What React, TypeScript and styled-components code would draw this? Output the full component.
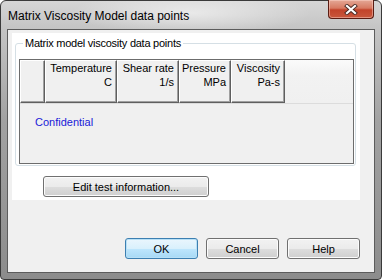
import { ReactElement } from 'react';
import styled, { createGlobalStyle } from 'styled-components';

const Global = createGlobalStyle`
  html, body {
    margin: 0;
    padding: 0;
    background: #ffffff;
  }
  body {
    font-family: "Liberation Sans", Arial, sans-serif;
    font-size: 11px;
    color: #000;
  }
`;

const Window = styled.div`
  box-sizing: border-box;
  width: 382px;
  height: 280px;
  border: 1px solid #3a3a3a;
  border-radius: 6px 6px 4px 4px;
  background: linear-gradient(to bottom, #d6d6d6 0px, #c4c4c4 28px, #a2a2a2 120px, #8c8c8c 100%);
  padding: 0 6px 6px 6px;
  display: flex;
  flex-direction: column;
`;

const TitleBar = styled.div`
  height: 28px;
  display: flex;
  justify-content: space-between;
  align-items: flex-start;
  background: radial-gradient(ellipse 120px 22px at 190px 12px, rgba(255, 255, 255, 0.55), rgba(255, 255, 255, 0));
  margin: 0 -6px;
  padding: 0 7px 0 7px;
`;

const Title = styled.div`
  font-size: 12px;
  line-height: 14px;
  margin-top: 8px;
  color: #000;
`;

const CloseButton = styled.div`
  width: 46px;
  height: 19px;
  margin-top: -1px;
  box-sizing: border-box;
  border: 1px solid #5a1c12;
  border-top: none;
  border-radius: 0 0 4px 4px;
  background: linear-gradient(to bottom, #e4a896 0%, #d77a62 45%, #c2432a 55%, #c8573c 100%);
  box-shadow: inset 0 0 0 1px rgba(255, 220, 210, 0.45);
  display: flex;
  align-items: center;
  justify-content: center;
`;

const Client = styled.div`
  flex: 1;
  border: 1px solid #5c5c5c;
  background: #f0f0f0;
  display: flex;
  flex-direction: column;
`;

const Panel = styled.div`
  margin: 3px 14px 0 4px;
  height: 167px;
  box-sizing: border-box;
  background: #ffffff;
  padding: 4px 0 0 3px;
  display: flex;
  flex-direction: column;
`;

const Group = styled.fieldset`
  margin: 0;
  width: 341px;
  box-sizing: border-box;
  border: 1px solid #d5dfe5;
  border-radius: 3px;
  padding: 0 1px 1px 3px;
  box-shadow: inset 1px 1px 0 #ffffff;
`;

const Legend = styled.legend`
  padding: 0 2px;
  margin-left: 4px;
  font-size: 11px;
  line-height: 13px;
  letter-spacing: -0.25px;
`;

const Grid = styled.div`
  margin-top: 9px;
  height: 105px;
  box-sizing: border-box;
  border: 1px solid #6c6c6c;
  background: #f0f0f0;
  display: flex;
  flex-direction: column;
`;

const HeaderRow = styled.div`
  display: flex;
  height: 43px;
  background: linear-gradient(to bottom, #fbfbfb 0%, #f2f2f2 35%, #f0f0f0 100%);
  border-bottom: 1px solid #dcdcdc;
`;

const HeaderCell = styled.div<{ $w: number }>`
  width: ${(p) => p.$w}px;
  flex: none;
  box-sizing: border-box;
  background: #f0f0f0;
  border-top: 1px solid #ffffff;
  border-left: 1px solid #ffffff;
  border-right: 1px solid #5f5f5f;
  border-bottom: 1px solid #5f5f5f;
  box-shadow: inset -1px -1px 0 #a0a0a0;
  padding: 0 4px 0 0;
  text-align: right;
  line-height: 14px;
  white-space: nowrap;
  color: #000;
`;

const Body = styled.div`
  flex: 1;
  padding: 11px 0 0 15px;
`;

const Note = styled.div`
  color: #1a1ad8;
  font-size: 11px;
  line-height: 14px;
`;

const EditButtonRow = styled.div`
  margin-top: 10px;
  padding-left: 28px;
`;

const Button = styled.button<{ $w: number; $default?: boolean }>`
  width: ${(p) => p.$w}px;
  height: 21px;
  box-sizing: border-box;
  font-family: "Liberation Sans", Arial, sans-serif;
  font-size: 11px;
  color: #000;
  padding: 0;
  border-radius: 3px;
  border: 1px solid ${(p) => (p.$default ? '#3c7fb1' : '#707070')};
  background: ${(p) =>
    p.$default
      ? 'linear-gradient(to bottom, #eaf6fd 0%, #d9f0fc 50%, #bee6fd 51%, #a7d9f5 100%)'
      : 'linear-gradient(to bottom, #f2f2f2 0%, #ebebeb 50%, #dddddd 51%, #cfcfcf 100%)'};
  box-shadow: inset 0 0 0 1px ${(p) => (p.$default ? '#b8e0f6' : '#fcfcfc')};
`;

const Footer = styled.div`
  margin-top: auto;
  margin-bottom: 13px;
  margin-right: 14px;
  display: flex;
  justify-content: flex-end;
  gap: 8px;
`;

const columns = [
  { name: 'Temperature', unit: 'C', w: 72 },
  { name: 'Shear rate', unit: '1/s', w: 62 },
  { name: 'Pressure', unit: 'MPa', w: 52 },
  { name: 'Viscosity', unit: 'Pa-s', w: 54 },
];

const App = (): ReactElement => (
  <>
    <Global />
    <Window>
      <TitleBar>
        <Title>Matrix Viscosity Model data points</Title>
        <CloseButton>
          <svg width="14" height="11" viewBox="0 0 14 11">
            <path d="M3 2 L11 9 M11 2 L3 9" stroke="#4a2a24" strokeWidth="4" strokeLinecap="square" />
            <path d="M3 2 L11 9 M11 2 L3 9" stroke="#ffffff" strokeWidth="2.2" strokeLinecap="square" />
          </svg>
        </CloseButton>
      </TitleBar>
      <Client>
        <Panel>
          <Group>
            <Legend>Matrix model viscosity data points</Legend>
            <Grid>
              <HeaderRow>
                <HeaderCell $w={25} />
                {columns.map((c) => (
                  <HeaderCell key={c.name} $w={c.w}>
                    {c.name}
                    <br />
                    {c.unit}
                  </HeaderCell>
                ))}
              </HeaderRow>
              <Body>
                <Note>Confidential</Note>
              </Body>
            </Grid>
          </Group>
          <EditButtonRow>
            <Button $w={166}>Edit test information...</Button>
          </EditButtonRow>
        </Panel>
        <Footer>
          <Button $w={73} $default>OK</Button>
          <Button $w={73}>Cancel</Button>
          <Button $w={73}>Help</Button>
        </Footer>
      </Client>
    </Window>
  </>
);

export default App;
